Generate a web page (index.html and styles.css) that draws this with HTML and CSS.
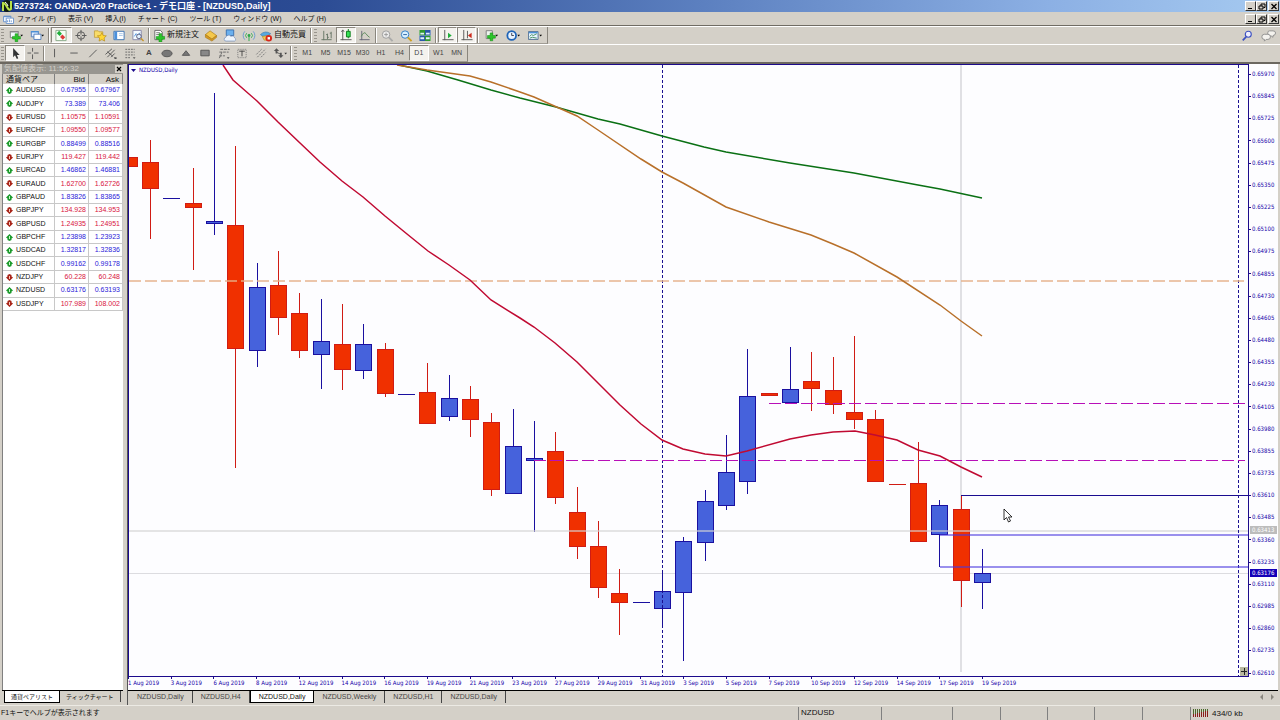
FILE: index.html
```html
<!DOCTYPE html>
<html lang="ja">
<head>
    <meta charset="UTF-8">
    <meta name="viewport" content="width=device-width, initial-scale=1.0">
    <title>5273724: OANDA-v20 Practice-1 - デモ口座 - [NZDUSD,Daily]</title>
    <link rel="stylesheet" href="styles.css">
</head>
<body>
    <header class="title-bar">
        <svg class="logo" viewBox="0 0 12 12"><circle cx="6" cy="6" r="6" fill="#101c10"/><path d="M2 11V3Q4 3 6 7T10 9V1" fill="none" stroke="#b8e04a" stroke-width="2"/><path d="M4 2Q6 3 7 6" fill="none" stroke="#fff"/></svg>
        <h1>5273724: OANDA-v20 Practice-1 - デモ口座 - [NZDUSD,Daily]</h1>
        <div class="window-buttons">
            <button aria-label="最小化"><svg viewBox="0 0 8 7"><path d="M1 5h4v1H1z"/></svg></button>
            <button aria-label="元に戻す"><svg viewBox="0 0 8 7"><path d="M3 1h4v3.500H5.500M3 1v2M1 3h4v3H1z" fill="none" stroke="#000"/></svg></button>
            <button class="close" aria-label="閉じる"><svg viewBox="0 0 8 7"><path d="M1.500 1l5 5M6.500 1l-5 5" fill="none" stroke="#000" stroke-width="1.300"/></svg></button>
        </div>
    </header>

    <nav class="menu-bar">
        <svg class="menu-icon" viewBox="0 0 12 11"><path d="M.5 2.500h8v6h-8z" fill="#eef6ff" stroke="#6a94cc"/><path d="M3.500 4.500h8v6h-8z" fill="#fff" stroke="#6a94cc"/><path d="M1 2h8v1.500H1z" fill="#6a94cc"/><path d="M5 9V7m2 2V6m2 3V7" stroke="#6a94cc"/></svg>
        <button>ファイル (F)</button>
        <button>表示 (V)</button>
        <button>挿入(I)</button>
        <button>チャート (C)</button>
        <button>ツール (T)</button>
        <button>ウィンドウ (W)</button>
        <button>ヘルプ (H)</button>
        <div class="window-buttons">
            <button aria-label="最小化"><svg viewBox="0 0 8 7"><path d="M1 5h4v1H1z"/></svg></button>
            <button aria-label="元に戻す"><svg viewBox="0 0 8 7"><path d="M3 1h4v3.500H5.500M3 1v2M1 3h4v3H1z" fill="none" stroke="#000"/></svg></button>
            <button class="close" aria-label="閉じる"><svg viewBox="0 0 8 7"><path d="M1.500 1l5 5M6.500 1l-5 5" fill="none" stroke="#000" stroke-width="1.300"/></svg></button>
        </div>
    </nav>

    <div class="toolbar-row">
        <div class="toolbar">
            <span class="grip"></span>
            <div class="group pair">
                <button aria-label="新規チャート"><svg viewBox="0 0 16 14"><path d="M1.500 2.500h9v7h-9z" fill="#f4faff" stroke="#777"/><path d="M1 2h10v1.500H1z" fill="#888"/><path d="M7 5h3v3h3v3h-3v3H7v-3H4V8h3z" fill="#2bc52b" stroke="#128a12" stroke-width=".6"/><path d="M13 6h3l-1.500 2z"/></svg></button>
                <button aria-label="プロファイル"><svg viewBox="0 0 16 14"><path d="M1.500 2.500h8v6h-8z" fill="#dcebff" stroke="#4a78b8"/><path d="M4.500 5.500h8v6h-8z" fill="#fff" stroke="#4a78b8"/><path d="M1 2h9v1.500H1z" fill="#4a90d8"/><path d="M13 6h3l-1.500 2z"/></svg></button>
            </div>
            <span class="sep"></span>
            <div class="group five">
                <button class="pressed" aria-label="気配値表示"><svg viewBox="0 0 14 14"><path d="M1.500 1.500h11v11h-11z" fill="#f4fff4" stroke="#8a8"/><path d="M2.500 4.500L5 2l3 3-2.500 2.500z" fill="#1fae3a"/><path d="M6 8.500L8.500 6l3 3L9 11.500z" fill="#dd3a3a"/></svg></button>
                <button aria-label="データウィンドウ"><svg viewBox="0 0 14 14"><circle cx="7" cy="7" r="4" fill="none" stroke="#555"/><path d="M7 1v5m0 2v5M1 7h5m2 0h5" stroke="#555"/></svg></button>
                <button aria-label="ナビゲーター"><svg viewBox="0 0 14 14"><path d="M1 2h4l1 1h4v6H1z" fill="#f8dc6a" stroke="#b8902a" stroke-width=".7"/><path d="M9 4l1.500 3 3.300.4-2.400 2.300.6 3.300-3-1.600L6 13l.6-3.300L4.200 7.400 7.500 7z" fill="#ffd633" stroke="#b88a10" stroke-width=".7"/></svg></button>
                <button aria-label="ターミナル"><svg viewBox="0 0 14 14"><path d="M1.500 2.500h11v9h-11z" fill="#fff" stroke="#3a70b0"/><path d="M2 3h3v8H2z" fill="#4a90dc"/><path d="M7 5h4M7 7h4" stroke="#aac8e8"/></svg></button>
                <button aria-label="ストラテジーテスター"><svg viewBox="0 0 14 14"><path d="M1.500 1.500h9v10h-9z" fill="#f4faff" stroke="#88a"/><path d="M3 8l2-3 2 2 2-3" fill="none" stroke="#4a90dc"/><circle cx="8" cy="8" r="2.500" fill="#dff0ff" stroke="#557"/><path d="M10 10l3 3" stroke="#c8962a" stroke-width="1.500"/></svg></button>
            </div>
            <span class="sep"></span>
            <button class="text-button"><svg viewBox="0 0 14 14"><path d="M2.500 1.500h6l2 2v8h-8z" fill="#fff" stroke="#666"/><path d="M4 4h4M4 6h3" stroke="#777"/><path d="M7 5h3v3h3v3h-3v3H7v-3H4V8h3z" fill="#2bc52b" stroke="#128a12" stroke-width=".6"/></svg>新規注文</button>
            <div class="group three">
                <button aria-label="メタエディター"><svg viewBox="0 0 14 14"><path d="M1 6l5-4 7 5-5 4z" fill="#f5c84a" stroke="#a87818" stroke-width=".7"/><path d="M1 6v3l7 4 5-4V7l-5 4z" fill="#d89a20" stroke="#a87818" stroke-width=".7"/></svg></button>
                <button aria-label="オプション"><svg viewBox="0 0 14 14"><path d="M3 1h8v6H3z" fill="#6ab0ee" stroke="#3a70b0"/><path d="M3 13a2 2 0 0 1-.5-4A3 3 0 0 1 8 8a2.500 2.500 0 0 1 4 1.500 2 2 0 0 1 0 3.500z" fill="#eef4fb" stroke="#6a8ab8" stroke-width=".7"/></svg></button>
                <button aria-label="シグナル"><svg viewBox="0 0 14 14"><circle cx="7" cy="7" r="1.500" fill="#2aa84a"/><path d="M4.500 4.500a3.500 3.500 0 0 0 0 5m5-5a3.500 3.500 0 0 1 0 5" fill="none" stroke="#3ab05a"/><path d="M2.500 2.500a6.500 6.500 0 0 0 0 9m9-9a6.500 6.500 0 0 1 0 9" fill="none" stroke="#6a9cd0"/><path d="M7 7v6" stroke="#2aa84a"/></svg></button>
            </div>
            <button class="text-button"><svg viewBox="0 0 14 14"><path d="M1 6q5-5 11-1l-4 3q-5 1-7-2z" fill="#58a8e0" stroke="#2a70a8" stroke-width=".6"/><path d="M3 8l6-1-1 5H5z" fill="#f2c850" stroke="#a88020" stroke-width=".6"/><circle cx="10" cy="10" r="3.500" fill="#d8281c"/><path d="M8.700 8.700h2.600v2.600H8.700z" fill="#fff"/></svg>自動売買</button>
            <span class="sep"></span>
            <span class="grip"></span>
            <div class="group three">
                <button aria-label="バーチャート"><svg viewBox="0 0 14 14"><path d="M3.500 2v10M1 11.500h11M7.500 5v6M6 6h1.500M7.500 9H9M11.500 3v7M10 4.500h1.500" fill="none" stroke="#667566"/></svg></button>
                <button class="pressed" aria-label="ローソク足"><svg viewBox="0 0 14 14"><path d="M3.500 1v11M1 11.500h12M2 3l1.500-2L5 3" fill="none" stroke="#555"/><path d="M9.500 0v10" stroke="#087a18"/><path d="M7.500 2.500h4v6h-4z" fill="#35e055" stroke="#087a18"/></svg></button>
                <button aria-label="ラインチャート"><svg viewBox="0 0 14 14"><path d="M3.500 2v10M1 11.500h11" stroke="#667" fill="none"/><path d="M3 8q3-6 5-3t4 4" fill="none" stroke="#5a8a5a"/></svg></button>
            </div>
            <span class="sep"></span>
            <div class="group three">
                <button aria-label="拡大"><svg viewBox="0 0 14 14"><circle cx="6" cy="6" r="4" fill="#ececec" stroke="#999"/><path d="M4 6h4M6 4v4" stroke="#999"/><path d="M9 9l4 4" stroke="#aaa" stroke-width="2"/></svg></button>
                <button aria-label="縮小"><svg viewBox="0 0 14 14"><circle cx="6" cy="6" r="4" fill="#d8f0ff" stroke="#2a78c0"/><path d="M4 6h4" stroke="#2a60a0"/><path d="M9 9l4 4" stroke="#d0a020" stroke-width="2"/></svg></button>
                <button aria-label="整列"><svg viewBox="0 0 14 14"><path d="M1 1h12v12H1z" fill="#fff"/><path d="M1 1h6v6H1zM7 7h6v6H7z" fill="#2f982f"/><path d="M7 1h6v6H7zM1 7h6v6H1z" fill="#2858a8"/><path d="M2 4h4v2H2zM8 4h4v2H8zM2 9h4v2H2zM8 9h4v2H8z" fill="#dff0f8"/></svg></button>
            </div>
            <span class="sep"></span>
            <div class="group two">
                <button class="pressed" aria-label="自動スクロール"><svg viewBox="0 0 14 14"><path d="M3.500 1v11M1 11.500h12" fill="none" stroke="#555"/><path d="M7 4l4 3-4 3z" fill="#1fae3a"/></svg></button>
                <button class="pressed" aria-label="チャートシフト"><svg viewBox="0 0 14 14"><path d="M3.500 1v11M1 11.500h12M7.500 2v8" fill="none" stroke="#555"/><path d="M12 4L8 7l4 3z" fill="#cc2a1c"/></svg></button>
            </div>
            <span class="sep"></span>
            <div class="group dropdowns">
                <button aria-label="インディケータ"><svg viewBox="0 0 16 14"><path d="M2.500 1.500h7v9h-7z" fill="#eef4ee" stroke="#777"/><path d="M7 4h3v3h3v3h-3v3H7v-3H4V7h3z" fill="#2bc52b" stroke="#128a12" stroke-width=".6"/><path d="M13 6h3l-1.500 2z"/></svg></button>
                <button aria-label="時間足"><svg viewBox="0 0 16 14"><circle cx="6.500" cy="7" r="5" fill="#e8f4ff" stroke="#1f64b8" stroke-width="2"/><path d="M6.500 4v3H9" fill="none" stroke="#334"/><path d="M13 6h3l-1.500 2z"/></svg></button>
                <button aria-label="テンプレート"><svg viewBox="0 0 16 14"><path d="M.5 2.500h11v9H.5z" fill="#e8f4ff" stroke="#4a6a90"/><path d="M1 3h10v1.500H1z" fill="#4a90d8"/><path d="M2 8l2-2 2 1 4-2M2 10l3-1 5 1" fill="none" stroke="#3a8a5a"/><path d="M13 6h3l-1.500 2z"/></svg></button>
            </div>
        </div>
        <div class="toolbar-right">
            <button aria-label="検索"><svg viewBox="0 0 14 14"><circle cx="8.500" cy="5" r="3.500" fill="#eef" stroke="#3c50c0" stroke-width="1.300"/><path d="M6 8l-4 4" stroke="#3c50c0" stroke-width="2"/></svg></button>
            <button aria-label="チャット"><svg viewBox="0 0 18 14"><path d="M8 3q0-2 2-2h4q3 0 3 2.500T14 6.500v2L12 7h-2Q8 7 8 5z" fill="#f4f2ee" stroke="#888"/><path d="M1 8q0-3 3-3h4q3 0 3 3t-3 3H6l-2 2v-2Q1 11 1 8z" fill="#f4f2ee" stroke="#888"/></svg></button>
        </div>
    </div>

    <div class="toolbar-row">
        <div class="toolbar">
            <span class="grip"></span>
            <div class="group cursors">
                <button class="pressed" aria-label="カーソル"><svg viewBox="0 0 14 14"><path d="M5 1v10l2-2 2 4 1.500-1L9 8.500h3z" fill="#333"/></svg></button>
                <button aria-label="十字カーソル"><svg viewBox="0 0 14 14"><path d="M6.500 1v4m0 3v5M1 6.500h4m3 0h5" stroke="#555"/></svg></button>
            </div>
            <span class="sep"></span>
            <div class="group drawing">
                <button aria-label="垂直線"><svg viewBox="0 0 14 14"><path d="M6.500 2v9" stroke="#555"/></svg></button>
                <button aria-label="水平線"><svg viewBox="0 0 14 14"><path d="M3 6.500h8" stroke="#555"/></svg></button>
                <button aria-label="トレンドライン"><svg viewBox="0 0 14 14"><path d="M3 11l8-8" stroke="#555"/></svg></button>
                <button aria-label="チャネル"><svg viewBox="0 0 14 14"><path d="M1 8l7-6M3 11l8-8M7 11l4-4M3 5l6 5" stroke="#555" fill="none"/><path d="M10 11h3v2h-2z" fill="#555"/></svg></button>
                <button aria-label="フィボナッチ"><svg viewBox="0 0 14 14"><path d="M2 2.500h10M2 5.500h10M2 8.500h10M2 11.500h6" stroke="#666" stroke-dasharray="2 1"/><path d="M10 11h3l-1.500 2z" fill="#555"/></svg></button>
                <button class="letter">A</button>
                <button aria-label="楕円"><svg viewBox="0 0 14 14"><ellipse cx="7" cy="7" rx="5.500" ry="3.500" fill="#777" stroke="#555"/></svg></button>
                <button aria-label="三角形"><svg viewBox="0 0 14 14"><path d="M7 4l4 5H3z" fill="#777" stroke="#555"/></svg></button>
                <button aria-label="長方形"><svg viewBox="0 0 14 14"><path d="M2.500 3.500h9v6h-9z" fill="#888" stroke="#555"/></svg></button>
                <button aria-label="扇形"><svg viewBox="0 0 14 14"><path d="M3 2.500h10M2 5.500h10M2 12l3-7M2 9.500h6" stroke="#666" fill="none" stroke-dasharray="3 1"/><path d="M10 11h3l-1.500 2z" fill="#555"/></svg></button>
                <button aria-label="テキストラベル"><svg viewBox="0 0 14 14"><path d="M2.500 2.500h9v9h-9z" fill="none" stroke="#777" stroke-dasharray="1 1"/><path d="M4 4.500h6M7 4v6" stroke="#444"/></svg></button>
                <button aria-label="ピッチフォーク"><svg viewBox="0 0 14 14"><path d="M2 8l6-6M3 11l9-9M7 11l5-5" stroke="#777" stroke-dasharray="2 1"/></svg></button>
                <button aria-label="矢印"><svg viewBox="0 0 16 14"><path d="M1 4l3-3 3 3H5v3H3V4zM6 9l3 3 3-3h-2V6H8v3z" fill="#555"/><path d="M3 5l6 3" stroke="#555"/><path d="M13 6h3l-1.500 2z" fill="#333"/></svg></button>
            </div>
            <span class="sep"></span>
            <span class="grip"></span>
            <div class="group periods">
                <button>M1</button>
                <button>M5</button>
                <button>M15</button>
                <button>M30</button>
                <button>H1</button>
                <button>H4</button>
                <button class="pressed">D1</button>
                <button>W1</button>
                <button>MN</button>
            </div>
        </div>
    </div>

    <main class="workspace">
        <aside class="market-watch">
            <div class="panel-title">
                <h2>気配値表示: 11:56:32</h2>
                <button aria-label="閉じる"><svg viewBox="0 0 6 6"><path d="M1 1l4 4M5 1L1 5" stroke="#000" stroke-width="1.200"/></svg></button>
            </div>
            <div class="quotes">
                <table>
                    <thead>
                        <tr><th>通貨ペア</th><th>Bid</th><th>Ask</th></tr>
                    </thead>
                    <tbody id="quotes"></tbody>
                </table>
            </div>
            <div class="panel-tabs">
                <button class="active">通貨ペアリスト</button>
                <button>ティックチャート</button>
            </div>
        </aside>

        <section class="chart-window">
            <div class="chart">
                <div class="plot">
                    <svg id="plot" viewBox="0 65 1119 611" preserveAspectRatio="xMinYMin meet"></svg>
                    <div class="chart-title">NZDUSD,Daily</div>
                </div>
                <div class="price-axis">
                    <div class="prices" id="prices"></div>
                    <span class="price-tag cursor-price">0.63413</span>
                    <span class="price-tag last-price">0.63176</span>
                </div>
                <div class="date-axis" id="dates"></div>
            </div>
            <div class="chart-tabs">
                <button>NZDUSD,Daily</button>
                <button>NZDUSD,H4</button>
                <button class="active">NZDUSD,Daily</button>
                <button>NZDUSD,Weekly</button>
                <button>NZDUSD,H1</button>
                <button>NZDUSD,Daily</button>
                <svg class="tab-arrows" viewBox="0 0 16 6"><path d="M4 0v6L1 3zM12 0v6l3-3z" fill="#8a8780"/></svg>
            </div>
        </section>
    </main>

    <footer class="status-bar">
        <span>F1キーでヘルプが表示されます</span>
        <span>NZDUSD</span>
        <span></span>
        <span></span>
        <span></span>
        <span></span>
        <span></span>
        <span></span>
        <span class="traffic">
            <svg viewBox="0 0 16 9"><path d="M.5 0v5M2.500 0v5M4.500 0v4M6.500 0v4M8.500 0v3M10.500 0v3M12.500 0v2M14.500 0v2" stroke="#4a6a2a"/><path d="M.5 5v3M2.500 5v3M4.500 4v4M6.500 4v4M8.500 3v5M10.500 3v5M12.500 2v6M14.500 2v6" stroke="#8a1c1c"/></svg>
            434/0 kb
        </span>
    </footer>

    <script src="chart.js"></script>
</body>
</html>
```
FILE: styles.css
```css
* {
    box-sizing: border-box;
}

body {
    margin: 0;
    min-height: 100vh;
    display: flex;
    flex-direction: column;
    background: #d4d0c8;
    color: #111;
    font-family: 'Liberation Sans', 'Noto Sans CJK JP', sans-serif;
    font-size: 8px;
    line-height: 10px;
}

button {
    margin: 0;
    padding: 0;
    border: none;
    background: none;
    color: inherit;
    font: inherit;
    white-space: nowrap;
}

svg {
    display: block;
}

h1, h2 {
    margin: 0;
    font-size: inherit;
    white-space: nowrap;
}

/* Title and menu */
.title-bar {
    display: flex;
    align-items: center;
    height: 12px;
    padding: 0 1px;
    background: linear-gradient(90deg, #1c3a86 0%, #2c4c94 25%, #5c80c0 55%, #8cb0e4 82%, #a6caf0 100%);
    color: #fff;
    font-size: 9px;
}

.title-bar h1 {
    line-height: 12px;
}

.logo {
    width: 12px;
    height: 12px;
    margin-right: 1px;
}

.menu-bar {
    display: flex;
    align-items: center;
    gap: 12px;
    height: 14px;
    padding: 0 1px 0 3px;
    border-bottom: 1px solid #706c64;
    font-size: 7px;
}

.menu-icon {
    width: 11px;
    height: 10px;
    margin-right: -9px;
}

.window-buttons {
    display: flex;
    margin-left: auto;
}

.window-buttons button {
    width: 11px;
    height: 10px;
    padding: 1px;
    background: #d4d0c8;
    border: 1px solid;
    border-color: #fff #333 #333 #fff;
}

.window-buttons svg {
    width: 8px;
    height: 7px;
}

.window-buttons .close {
    margin-left: 1px;
}

/* Toolbars */
.toolbar-row {
    display: flex;
    justify-content: space-between;
    height: 18px;
    border-top: 1px solid #fff;
}

.toolbar {
    display: flex;
    align-items: center;
    padding-right: 1px;
    border-right: 1px solid #8a867e;
    border-bottom: 1px solid #a09c94;
}

.toolbar svg {
    width: 14px;
    height: 13px;
    margin: 0 auto;
}

.grip {
    width: 3px;
    height: 13px;
    margin: 0 1px;
    background: repeating-linear-gradient(#98948c 0 1px, #d4d0c8 1px 3px);
}

.sep {
    width: 2px;
    height: 15px;
    margin: 0 1px;
    border-left: 1px solid #8a867e;
    border-right: 1px solid #fff;
}

.group {
    display: flex;
    height: 16px;
}

.group button {
    flex: 1;
}

.group .pressed {
    background: #f4f2ee;
    border: 1px solid;
    border-color: #8a867e #fff #fff #8a867e;
}

.pair {
    width: 42px;
}

.five {
    width: 96px;
}

.two {
    width: 38px;
}

.three {
    width: 56px;
}

.dropdowns {
    width: 66px;
}

.cursors {
    width: 37px;
}

.drawing {
    width: 243px;
}

.periods {
    width: 168px;
    color: #444;
    font-size: 7px;
}

.letter {
    color: #444;
    font-weight: bold;
}

.text-button {
    display: flex;
    align-items: center;
    gap: 1px;
    width: 51px;
    padding-left: 1px;
}

.toolbar .text-button svg {
    margin: 0;
}

.toolbar-right {
    display: flex;
    align-items: center;
    gap: 8px;
    padding-right: 4px;
}

.toolbar-right svg {
    height: 12px;
}

/* Market watch */
.workspace {
    flex: 1;
    display: flex;
    min-height: 0;
    padding-right: 2px;
    border-top: 2px solid #6c6860;
}

.market-watch {
    flex: none;
    display: flex;
    flex-direction: column;
    width: 127px;
    padding: 0 4px 2px 2px;
}

.panel-title {
    display: flex;
    align-items: center;
    justify-content: space-between;
    height: 10px;
    padding-left: 2px;
    background: #989690;
    color: #d4d0c8;
    overflow: hidden;
}

.panel-title h2 {
    font-weight: normal;
}

.panel-title button {
    width: 8px;
    height: 8px;
    padding: 1px;
    background: #d4d0c8;
}

.quotes {
    flex: 1;
    background: #fff;
    border-left: 1px solid #808080;
}

.quotes table {
    width: 100%;
    height: 237px;
    border-collapse: separate;
    border-spacing: 0;
    table-layout: fixed;
}

.quotes th {
    width: 34px;
    height: 10px;
    padding: 0 3px;
    background: #d4d0c8;
    border-right: 1px solid #808080;
    font-weight: normal;
    line-height: 9px;
    text-align: right;
}

.quotes th:first-child {
    width: auto;
    text-align: left;
}

.quotes td {
    padding: 0 2px;
    border-right: 1px solid #c8c8c8;
    border-bottom: 1px solid #c8c8c8;
    font-size: 7px;
    text-align: right;
}

.quotes td:first-child {
    padding-left: 3px;
    text-align: left;
}

.quotes td svg {
    display: inline-block;
    width: 7px;
    height: 7px;
    margin-right: 3px;
    vertical-align: middle;
}

.up {
    color: #2a22d8;
}

.down {
    color: #d81440;
}

.symbol {
    color: #111;
}

.panel-tabs {
    display: flex;
    height: 13px;
    padding-left: 2px;
    border-top: 1px solid #000;
    font-size: 6px;
}

.panel-tabs button {
    height: 11px;
    padding: 0 6px;
    border-right: 1px solid #444;
}

.panel-tabs .active {
    height: 12px;
    background: #fff;
    border: 1px solid #000;
    border-top: none;
}

/* Chart */
.chart-window {
    flex: 1;
    display: flex;
    flex-direction: column;
    min-width: 0;
    padding-bottom: 2px;
    border-left: 1px solid #555;
}

.chart {
    flex: 1;
    display: grid;
    grid-template-columns: 1fr 29px;
    grid-template-rows: 1fr 13px;
    min-height: 0;
    background: #fdfdff;
    color: #1400a8;
    font-family: 'DejaVu Sans Condensed', 'Open Sans', sans-serif;
    font-size: 6px;
    line-height: 8px;
}

.plot {
    position: relative;
    min-height: 0;
    border: 1px solid #1c0a8c;
}

.plot svg {
    width: 100%;
    height: 100%;
}

.chart-title {
    position: absolute;
    top: 1px;
    left: 10px;
}

.price-axis {
    position: relative;
    padding: 6px 0 0;
}

.prices {
    display: flex;
    flex-direction: column;
    justify-content: space-between;
    height: 100%;
}

.prices span::before {
    content: '';
    display: inline-block;
    width: 2px;
    height: 1px;
    margin-right: 1px;
    background: #1c0a8c;
    vertical-align: middle;
}

.price-tag {
    position: absolute;
    left: 1px;
    width: 27px;
    padding-left: 2px;
    color: #fff;
}

.cursor-price {
    top: 462px;
    background: #bcbcbc;
}

.last-price {
    top: 505px;
    background: #1400b8;
}

.date-axis {
    display: grid;
    grid-template-columns: repeat(21, 1fr);
    width: 80%;
    white-space: nowrap;
}

.date-axis span::before {
    content: '';
    display: block;
    width: 1px;
    height: 2px;
    background: #1c0a8c;
}

.chart-tabs {
    display: flex;
    align-items: flex-start;
    height: 13px;
    padding-left: 1px;
    border-top: 1px solid #000;
    color: #444;
    font-size: 7px;
}

.chart-tabs button {
    height: 12px;
    padding: 0 8px;
    border-right: 1px solid #444;
}

.chart-tabs .active {
    background: #fff;
    border: 1px solid #000;
    border-top: none;
    color: #111;
}

.tab-arrows {
    width: 16px;
    height: 6px;
    margin: 3px 3px 0 auto;
}

/* Status bar */
.status-bar {
    display: grid;
    grid-template-columns: 1fr 83px 71px 48px 47px 47px 48px 48px 90px;
    height: 15px;
    padding-top: 1px;
    border-top: 1px solid #eceae4;
    line-height: 12px;
}

.status-bar span {
    padding-left: 2px;
    border-left: 1px solid #808080;
}

.status-bar span:first-child {
    padding-left: 1px;
    border-left: none;
    font-size: 7px;
}

.traffic {
    display: flex;
    align-items: center;
    gap: 3px;
}

.traffic svg {
    width: 16px;
    height: 9px;
}
```
FILE: chart.js
```js
const QUOTES = [
    ['AUDUSD', '0.67955', '0.67967', 'up'],
    ['AUDJPY', '73.389', '73.406', 'up'],
    ['EURUSD', '1.10575', '1.10591', 'down'],
    ['EURCHF', '1.09550', '1.09577', 'down'],
    ['EURGBP', '0.88499', '0.88516', 'up'],
    ['EURJPY', '119.427', '119.442', 'down'],
    ['EURCAD', '1.46862', '1.46881', 'up'],
    ['EURAUD', '1.62700', '1.62726', 'down'],
    ['GBPAUD', '1.83826', '1.83865', 'up'],
    ['GBPJPY', '134.928', '134.953', 'down'],
    ['GBPUSD', '1.24935', '1.24951', 'down'],
    ['GBPCHF', '1.23898', '1.23923', 'up'],
    ['USDCAD', '1.32817', '1.32836', 'up'],
    ['USDCHF', '0.99162', '0.99178', 'up'],
    ['NZDJPY', '60.228', '60.248', 'down'],
    ['NZDUSD', '0.63176', '0.63193', 'up'],
    ['USDJPY', '107.989', '108.002', 'down']
];

const PRICES = [
    '0.65970', '0.65845', '0.65725', '0.65600', '0.65475', '0.65350', '0.65225',
    '0.65100', '0.64975', '0.64855', '0.64730', '0.64605', '0.64480', '0.64355',
    '0.64230', '0.64105', '0.63980', '0.63855', '0.63735', '0.63610', '0.63485',
    '0.63360', '0.63235', '0.63110', '0.62985', '0.62860', '0.62735', '0.62610'
];

const DATES = [
    '1 Aug', '3 Aug', '6 Aug', '8 Aug', '12 Aug', '14 Aug', '16 Aug', '19 Aug',
    '21 Aug', '23 Aug', '27 Aug', '29 Aug', '31 Aug', '3 Sep', '5 Sep', '7 Sep',
    '10 Sep', '12 Sep', '14 Sep', '17 Sep', '19 Sep'
];

// high, body top, body bottom, low, b = bull / r = bear
const CANDLES = [
    [157, 157, 167, 167, 'r'], [140, 162, 189, 239, 'r'], [198, 198, 199, 199, 'b'],
    [168, 203, 208, 270, 'r'], [93, 221, 224, 235, 'b'], [146, 225, 349, 468, 'r'],
    [263, 287, 351, 367, 'b'], [251, 285, 318, 335, 'r'], [293, 313, 351, 358, 'r'],
    [299, 341, 355, 389, 'b'], [304, 344, 370, 390, 'r'], [324, 344, 371, 379, 'b'],
    [343, 349, 394, 397, 'r'], [394, 394, 395, 395, 'b'], [363, 392, 424, 424, 'r'],
    [375, 398, 417, 421, 'b'], [386, 399, 420, 437, 'r'], [413, 422, 490, 496, 'r'],
    [409, 446, 494, 494, 'b'], [421, 458, 461, 532, 'b'], [432, 451, 498, 504, 'r'],
    [487, 512, 547, 559, 'r'], [521, 546, 588, 598, 'r'], [569, 593, 603, 635, 'r'],
    [602, 602, 603, 603, 'b'], [573, 591, 609, 625, 'b'], [537, 541, 593, 661, 'b'],
    [490, 501, 543, 561, 'b'], [435, 472, 506, 510, 'b'], [349, 396, 482, 494, 'b'],
    [393, 393, 396, 396, 'r'], [347, 389, 403, 403, 'b'], [352, 381, 389, 411, 'r'],
    [357, 390, 405, 414, 'r'], [336, 412, 420, 429, 'r'], [410, 419, 482, 482, 'r'],
    [484, 484, 485, 485, 'r'], [442, 483, 542, 542, 'r'], [500, 505, 535, 567, 'b'],
    [496, 509, 581, 607, 'r'], [549, 573, 583, 609, 'b']
];

const AVERAGES = [
    ['#0a7014', '270,65 298,71 329,80 362,90 391,98 427,107 469,119 491,124 533,136 575,147 597,152 661,163 725,173 789,185 811,189 853,198'],
    ['#b8702a', '268,65 298,70 341,76 362,82 391,92 405,97 448,116 469,130 512,159 533,172 554,183 597,207 640,222 682,235 704,244 725,253 768,277 811,305 832,321 853,336'],
    ['#c00a32', '94,65 104,80 128,101 149,122 171,143 191,162 213,181 234,197 256,216 278,234 299,251 320,265 341,280 362,300 391,318 405,327 426,343 448,362 469,383 491,405 512,424 533,440 554,449 576,454 597,456 618,451 661,439 682,435 704,432 726,431 746,435 768,440 789,450 811,456 832,467 853,477']
];

const line = (x1, y1, x2, y2, color, extra = '') =>
    `<line x1="${x1}" y1="${y1}" x2="${x2}" y2="${y2}" stroke="${color}" ${extra}/>`;

function drawCandle([high, top, bottom, low, side], i) {
    const x = Math.floor(i * 64 / 3);
    const fill = side === 'b' ? '#4662dc' : '#f03000';
    const edge = side === 'b' ? '#1a10a0' : '#d01c14';
    const body = bottom - top <= 1
        ? line(x - 8, top + 0.5, x + 9, top + 0.5, edge)
        : `<rect x="${x - 7.5}" y="${top + 0.5}" width="16" height="${bottom - top - 1}" fill="${fill}" stroke="${edge}"/>`;
    return line(x + 0.5, high, x + 0.5, low, edge) + body;
}

function drawPlot() {
    // crosshair and bid line
    let out = line(832, 65, 832, 672, '#e0e0e4', 'stroke-width="2"');
    out += line(0, 573.5, 1119, 573.5, '#dcdce0');
    out += CANDLES.map(drawCandle).join('');
    out += line(0, 531, 1119, 531, '#d4d4d4', 'stroke-width="2" opacity=".6"');

    // period separators
    out += line(533.5, 65, 533.5, 676, '#1a1090', 'stroke-dasharray="3 2"');
    out += line(1109.5, 65, 1109.5, 676, '#1a1090', 'stroke-dasharray="3 2"');

    // levels
    out += line(0, 281, 1115, 281, '#e6b088', 'stroke-width="2" stroke-dasharray="12 4" opacity=".7"');
    out += line(640, 403.5, 1116, 403.5, '#b810b8', 'stroke-dasharray="12 4"');
    out += line(405, 460.5, 1116, 460.5, '#b810b8', 'stroke-dasharray="12 4"');
    out += line(832, 495.5, 1119, 495.5, '#1a0c90');
    out += line(811, 535, 1119, 535, '#4a38e0', 'stroke-width="2" opacity=".55"');
    out += line(811, 567, 1119, 567, '#4a38e0', 'stroke-width="2" opacity=".55"');

    AVERAGES.forEach(([color, points]) => {
        out += `<polyline points="${points}" fill="none" stroke="${color}" stroke-width="1.5"/>`;
    });

    // title arrow, corner button, mouse pointer
    out += '<path d="M2 69h5l-2.500 3z" fill="#1c0a8c"/>';
    out += '<path d="M1111 667h8v9h-8z" fill="#b8b8a0"/><path d="M1115.500 668v7M1112 671.500h6" stroke="#222"/>';
    out += '<path d="M875 509v11l2.500-2.500 2 4.500 2-1-2-4h3.500z" fill="#fff" stroke="#000" stroke-width=".8"/>';

    document.getElementById('plot').innerHTML = out;
}

function drawQuotes() {
    document.getElementById('quotes').innerHTML = QUOTES.map(([symbol, bid, ask, side]) => {
        const arrow = side === 'up'
            ? '<path d="M3.500 0L7 3.500 5.500 4.500V6L3.500 7 1.500 6V4.500L0 3.500z" fill="#1c9a2c"/><path d="M3 2h1v3H3z" fill="#c8f8c8"/>'
            : '<path d="M3.500 7L7 3.500 5.500 2.500V1L3.500 0l-2 1v1.500L0 3.500z" fill="#a82418"/><path d="M3 2h1v3H3z" fill="#f8c8b8"/>';
        return `<tr><td class="symbol"><svg viewBox="0 0 7 7">${arrow}</svg>${symbol}</td>` +
            `<td class="${side}">${bid}</td><td class="${side}">${ask}</td></tr>`;
    }).join('');
}

function drawAxes() {
    document.getElementById('prices').innerHTML = PRICES.map(p => `<span>${p}</span>`).join('');
    document.getElementById('dates').innerHTML = DATES.map(d => `<span>${d} 2019</span>`).join('');
}

drawQuotes();
drawAxes();
drawPlot();
```
